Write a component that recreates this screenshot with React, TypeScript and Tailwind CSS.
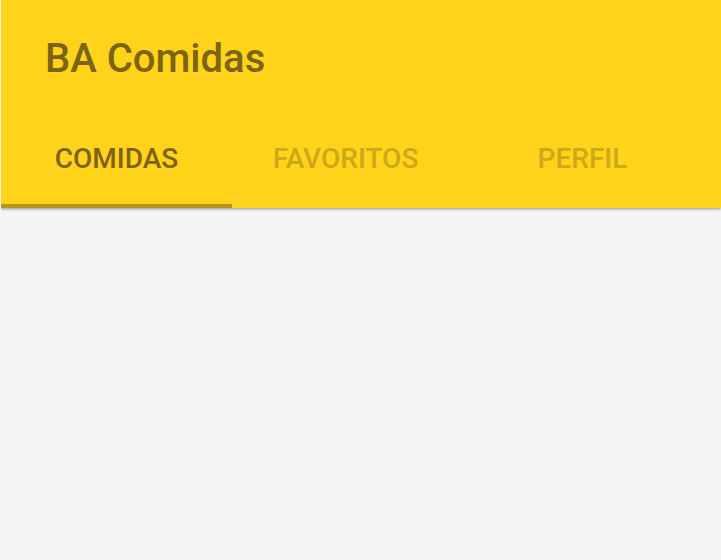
const tabs = [
  { label: "Comidas", width: "w-[231px]", active: true },
  { label: "Favoritos", width: "w-[227px]", active: false },
  { label: "Perfil", width: "w-[247px]", active: false },
];

const App = () => {
  return (
    <div className="flex h-[560px] w-[721px] flex-col overflow-hidden border-l border-[#f4f4f4] bg-[#f5f5f3] font-['Roboto',sans-serif]">
      {/* App bar */}
      <header className="relative z-10 bg-[#ffd319] shadow-[0_1px_3px_rgba(0,0,0,0.4)]">
        <div className="h-[108px] pl-[44px] pt-[39px]">
          <h1 className="text-[40px] font-medium leading-[40px] text-[#7d6314]">BA Comidas</h1>
        </div>

        {/* Tabs */}
        <nav className="flex h-[100px]">
          {tabs.map((tab) => (
            <div key={tab.label} className={`relative flex h-full items-center justify-center pt-[2px] ${tab.width}`}>
              <span
                className={`text-[28px] font-medium uppercase leading-none ${
                  tab.active ? "text-[#7d6314]" : "text-[#cca81a]"
                }`}
              >
                {tab.label}
              </span>
              {tab.active && <div className="absolute bottom-0 left-0 h-[4px] w-full bg-[#b8941c]" />}
            </div>
          ))}
        </nav>
      </header>

      <main className="flex-1" />
    </div>
  );
};

export default App;
